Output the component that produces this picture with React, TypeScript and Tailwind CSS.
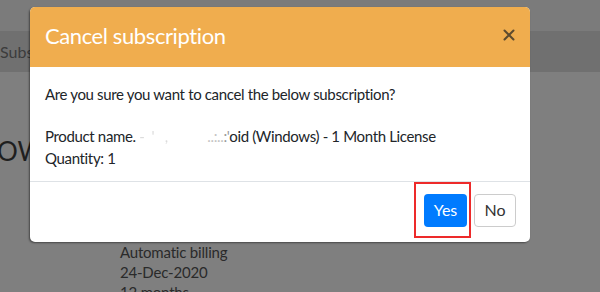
import React from "react";

export default function App() {
  const font = { fontFamily: 'Lato, "Open Sans", sans-serif' };
  return (
    <div className="relative w-[600px] h-[292px] overflow-hidden bg-[#7f7f7f] text-[#333]" style={font}>
      {/* background page (under overlay) */}
      <div className="flex flex-col">
        <div className="h-[31px] bg-[#7b7b7b]" />
        <div className="h-[41px] bg-[#707070] flex items-center">
          <div className="w-[30px] overflow-hidden whitespace-nowrap">
            <span className="text-[16px] text-[#3c3c3c]">Subscriptions</span>
          </div>
        </div>
        <div className="h-[61px]" />
        <div className="w-[30px] overflow-hidden whitespace-nowrap">
          <div className="text-[26px] leading-[36px] text-[#1f1f1f] -ml-[3px]">OWS</div>
        </div>
        <div className="h-[73px]" />
        <div className="pl-[120px] text-[15px] leading-[20px] tracking-[-0.2px] text-[#2a2a2a] flex flex-col">
          <span>Automatic billing</span>
          <span>24-Dec-2020</span>
          <span>12 months</span>
        </div>
      </div>

      {/* modal */}
      <div className="absolute left-[30px] top-[7px] w-[500px] h-[235px] bg-white rounded-[5px] overflow-hidden shadow-[-1px_1px_2px_rgba(0,0,0,0.45)] flex flex-col">
        <div className="h-[60px] bg-[#f0ad4e] flex items-center justify-between pl-[15px] pr-[15px]">
          <span className="text-[22px] tracking-[-0.4px] text-white leading-none pb-[2px]">Cancel subscription</span>
          <svg width="12" height="12" viewBox="0 0 12 12" className="mt-[-5px]">
            <path d="M1.5 1.5 L10.5 10.5 M10.5 1.5 L1.5 10.5" stroke="#5c4a2e" strokeWidth="2" strokeLinecap="round" />
          </svg>
        </div>
        <div className="px-[15px] pt-[16px] text-[15px] tracking-[-0.35px] leading-[22px] text-[#212529] h-[114px]">
          <p>Are you sure you want to cancel the below subscription?</p>
          <p className="mt-[20px] whitespace-nowrap">
            Product name.{" "}
            <span className="inline-block w-[68px] text-[#dcdcdc] blur-[0.6px]">- &nbsp;' &nbsp;&nbsp;,</span>
            <span className="text-[#c4c4c4]">..:..</span>
            <span className="text-[#999]">:'</span>oid (Windows) - 1 Month License
          </p>
          <p>Quantity: 1</p>
        </div>
        <div className="border-t border-[#dee2e6] flex-1 flex items-center justify-end gap-[7px] pr-[14px] pb-[4px]">
          <div className="relative">
            <button className="w-[43px] h-[33px] rounded-[4px] bg-[#007bff] text-white text-[16px]">Yes</button>
            <div className="absolute left-[-10px] top-[-12px] w-[57px] h-[56px] border-2 border-[#ed2a2a]" />
          </div>
          <button className="w-[42px] h-[33px] rounded-[4px] bg-white border border-[#ccc] text-[#333] text-[16px]">No</button>
        </div>
      </div>
    </div>
  );
}
